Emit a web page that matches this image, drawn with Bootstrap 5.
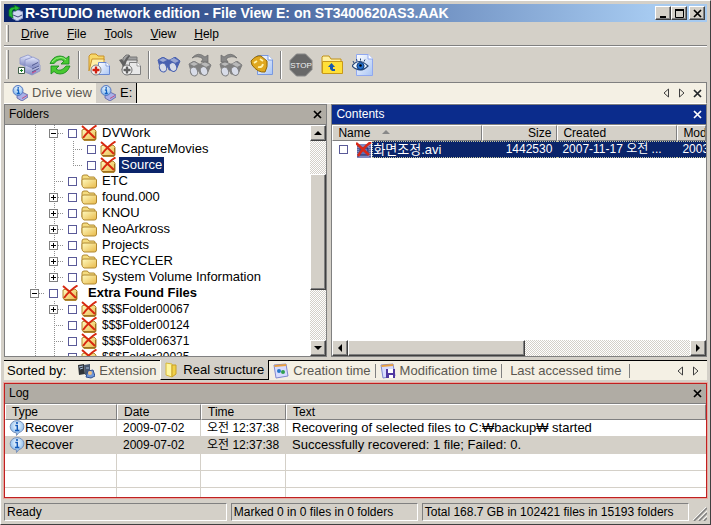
<!DOCTYPE html>
<html lang="en">
<head>
<meta charset="utf-8">
<meta name="viewport" content="width=device-width, initial-scale=1">
<title>R-STUDIO network edition</title>
<link href="https://cdn.jsdelivr.net/npm/bootstrap@5.3.0/dist/css/bootstrap.min.css" rel="stylesheet">
<style>
:root{--face:#d4d0c8;--shade:#808080;--dark:#404040;--cream:#f4f0e4;--navy:#0a246a;--line:#d4d0c8}
body{font-family:"Liberation Sans","Noto Sans CJK KR",sans-serif;font-size:12px;line-height:16px;color:#000;background:var(--face)}
button{font:inherit;color:inherit;padding:0;border:0;background:none}
a{color:inherit;text-decoration:none}
svg{display:block;flex:none}
.win{height:100vh;background:var(--face);border:1px solid #fff;border-right-color:var(--dark);border-bottom-color:var(--dark);padding:3px}
.titlebar{height:18px;background:linear-gradient(90deg,#0a246a,#a6caf0 92%);color:#fff;padding:0 2px 0 3px;gap:2px}
.titlebar h1{font-size:14px;line-height:18px;font-weight:700}
.capbtn{width:16px;height:14px;background:var(--face)}
.capgroup{gap:0}
.raised{background:var(--face);border:1px solid;border-color:#fff var(--dark) var(--dark) #fff;box-shadow:inset -1px -1px 0 var(--shade)}
.menubar{height:24px;border-bottom:1px solid var(--shade)}
.menulist{gap:18px}
.toolbar{height:36px;border-top:1px solid #fff}
.grip{width:3px;border-left:1px solid #fff;border-right:1px solid var(--shade);margin:3px 0 3px 2px}
.tool{width:31px;height:34px}
.toolsep{width:2px;height:28px;border-left:1px solid var(--shade);border-right:1px solid #fff;margin:0 3px}
.tabstrip{height:22px;background:var(--cream);border-top:1px solid var(--shade);border-bottom:1px solid #fff;border-right:1px solid var(--shade);font-size:13px;color:#5a5750}
.tabstrip .on{background:var(--face);border-right:1px solid #000;color:#000}
.pane{border:1px solid var(--shade);background:#fff;min-width:0}
.panehead{height:20px;background:#b0aca4;border-bottom:1px solid var(--shade)}
.panehead h2{font-size:12px;line-height:19px;font-weight:400}
.panehead.hot{background:#0b2c8c;color:#fff}
.folders{flex:0 0 46%}
.track{background:repeating-conic-gradient(#fff 0 25%,var(--face) 0 50%) 0 0/2px 2px}
.vbar{width:16px}.hbar{height:16px}
.arrow{width:16px;height:16px}
.vspace{flex:33}.vthumb{flex:115}.vrest{flex:50}
.hthumb{flex:176}.hrest{flex:166}
.tree{padding-left:21px;font-size:13px}
.tree li{height:16px;white-space:nowrap}
.guide{width:19px;height:16px;flex:none;--dot:#909090}
.thru{background:repeating-linear-gradient(var(--dot) 0 1px,transparent 1px 2px) 9px 0/1px 100% no-repeat}
.arm{background:repeating-linear-gradient(var(--dot) 0 1px,transparent 1px 2px) 9px 0/1px 100% no-repeat,repeating-linear-gradient(90deg,var(--dot) 0 1px,transparent 1px 2px) 9px 8px/10px 1px no-repeat}
.arm.end{background-size:1px 8px,10px 1px}
.expander{width:9px;height:9px;border:1px solid var(--shade);background:#fff}
.tick{appearance:none;width:9px;height:9px;border:1px solid #5a5a98;background:#fff;margin:0;flex:none}
.tree label{padding:0 2px;margin-left:3px}
.tree .picked{background:var(--navy);color:#fff}
.tree .numbered{font-size:12px}
.grid{width:100%;table-layout:fixed;border-collapse:separate;border-spacing:0}
.grid th{font-weight:400;background:var(--face);border:1px solid;border-color:#fff var(--shade) var(--shade) #fff;line-height:14px;height:16px}
.grid th,.grid td{padding:0 5px;white-space:nowrap;overflow:hidden}
.files td{height:17px;line-height:15px;background:var(--navy);color:#fff;border:dotted #c8c8a0;border-width:1px 0}
.files td:first-child{border:0;padding-left:7px;background:#fff}
.filename{background:var(--navy);border:1px dotted #c8c8a0;border-right:0;height:17px;flex:1;font-size:13px}
.sortbar{height:20px;background:var(--cream);font-size:13px;color:#5a5750;border-top:1px solid #000;margin-top:3px}
.sortbar .caption{padding:0 12px 0 3px}
.sortbar .on{background:var(--face);color:#000;border:solid #000;border-width:0 1px 1px 0;border-left:1px solid #fff;margin-top:-1px;height:20px}
.bar{width:1px;height:14px;background:var(--shade)}
.log{border:1px solid #c02020;outline:1px solid #e8a8a0;margin-top:3px;height:115px;overflow:hidden;background:#fff}
.records td{height:17px;line-height:16px;border-right:1px solid var(--line);border-bottom:1px solid var(--line)}
.records th,.records td{padding:0 6px}
.records td:first-child{padding:0 4px;font-size:13px}
.records td:last-child{border-right:0;font-size:13px}
.records .alt td{background:var(--face)}
.statusbar{height:18px;margin-top:5px}
.statusbar>span{border:1px solid;border-color:var(--shade) #fff #fff var(--shade);padding:0 2px;white-space:nowrap}
.s1{flex:224}.s2{flex:187}.s3{flex:270}
</style>
<script src="https://cdn.jsdelivr.net/npm/bootstrap@5.3.0/dist/js/bootstrap.bundle.min.js"></script>
</head>
<body class="overflow-hidden">
<svg width="0" height="0" class="position-absolute" aria-hidden="true">
<defs>
<linearGradient id="gold" x2="1" y2="1"><stop offset="0" stop-color="#fffbc0"/><stop offset="1" stop-color="#e8b848"/></linearGradient>
<linearGradient id="paper" x2="1" y2="1"><stop offset="0" stop-color="#fff"/><stop offset="1" stop-color="#a8c4f4"/></linearGradient>
<linearGradient id="steel" x2="0" y2="1"><stop offset="0" stop-color="#e8ecff"/><stop offset="1" stop-color="#8088c0"/></linearGradient>
<radialGradient id="orb" cx=".5" cy=".35"><stop offset="0" stop-color="#fff"/><stop offset="1" stop-color="#90c0f0"/></radialGradient>
<symbol id="folder" viewBox="0 0 16 16"><path d="M1 12V4q0-2 2-2h3q1 0 2 2h5q1 0 1 2v2" fill="#f4dc80" stroke="#b08830"/><path d="M3 6h11.500q1 0 1 1v6q0 2-2 2H3Q1 14 1 12V7q0-1 2-1z" fill="url(#gold)" stroke="#b08830"/></symbol>
<symbol id="lost" viewBox="0 0 16 16"><path d="M1 5l3-1 4 2 5-2 2 2v8l-1 1.500H3L1 13z" fill="url(#gold)" stroke="#b08830"/><path d="M2 14.500h12.500V7" fill="none" stroke="#a07020"/><path d="M1 1q6 5 13 12M15.500 .5Q8 5 2 13" fill="none" stroke="#d82810" stroke-width="2"/></symbol>
<symbol id="film" viewBox="0 0 16 16"><path d="M1 2h14v14H1z" fill="#8088c0"/><path d="M4 6h8v7H4z" fill="#6070b8" stroke="#202860"/><path d="M2 4v11M14 4v11" stroke="#303870" stroke-dasharray="1 1"/><path d="M0 1l13 12M15 0Q8 5 2 14" fill="none" stroke="#d82818" stroke-width="2.600"/></symbol>
<symbol id="diskinfo" viewBox="0 0 16 16"><path d="M5 11l5-4 6 3v2l-6 4-5-3z" fill="#a8b0e8" stroke="#5860a0" stroke-width=".8"/><path d="M10 13.500l5-3" stroke="#c05080"/><circle cx="6" cy="5.500" r="5" fill="url(#orb)" stroke="#5878c0"/><path d="M4.800 5h1.700v3M4.800 8.500h3" stroke="#1060c0" stroke-width="1.300" fill="none"/><circle cx="6.200" cy="2.900" r=".9" fill="#1060c0"/></symbol>
<symbol id="balloon" viewBox="0 0 16 16"><path d="M8 .7a6.600 6 0 0 1 2 11.800L7.500 15.500 7.300 12.800A6.400 6 0 0 1 8 .7z" fill="url(#orb)" stroke="#7890b8"/><path d="M6.300 5.500h2v5M6 10.500h4.300" stroke="#1058b8" stroke-width="1.500" fill="none"/><circle cx="8" cy="3" r="1.100" fill="#1058b8"/></symbol>
<symbol id="binocs" viewBox="0 0 24 16"><path d="M1 3l5-3 5 3 2 0 5-3 5 4-4 9H12l-1-4-3 5H4z" fill="currentColor" stroke="currentColor"/><path d="M2 3l4-2 4 2-4 2zM13 3l4-2 5 3-4 2z" fill="#fff" opacity=".45"/><ellipse cx="6" cy="10.500" rx="3.600" ry="4.500" fill="#d8dce8" stroke="currentColor" transform="rotate(-20 6 10.500)"/><ellipse cx="16" cy="10" rx="3.600" ry="4.500" fill="#d8dce8" stroke="currentColor" transform="rotate(-20 16 10)"/></symbol>
<symbol id="cal" viewBox="0 0 16 16"><path d="M1 2l12-1 2 12-12 2z" fill="#d8dcff" stroke="#8088d0"/><path d="M1.500 3l11.700-1" stroke="#e8a040" stroke-width="2"/></symbol>
<symbol id="prev" viewBox="0 0 7 10"><path d="M5.500 1v8L1 5z" fill="none" stroke="#404040"/></symbol>
<symbol id="next" viewBox="0 0 7 10"><path d="M1.500 1v8L6 5z" fill="none" stroke="#404040"/></symbol>
<symbol id="cross" viewBox="0 0 9 9"><path d="M1 1l7 7M8 1L1 8" fill="none" stroke="currentColor" stroke-width="1.700"/></symbol>
</defs>
</svg>

<div class="win d-flex flex-column">
  <header class="titlebar d-flex align-items-center flex-shrink-0">
    <svg width="16" height="16" viewBox="0 0 16 16"><path d="M6 7l5-2 5 2v6l-6 3-5-3z" fill="#d0d8f0" stroke="#8090c0"/><path d="M6 10l5 2 4-2" fill="none" stroke="#404878"/><path d="M2 8Q1 2 8 2l-1-2 6 3-5 3V4Q5 4 5 8l1 5-4-2z" fill="#28b838" stroke="#087818" stroke-width=".7"/></svg>
    <h1 class="m-0 text-nowrap flex-grow-1">R-STUDIO network edition - File View E: on ST3400620AS3.AAK</h1>
    <div class="capgroup d-flex">
      <button class="capbtn raised" aria-label="Minimize"><svg width="13" height="11" viewBox="0 0 13 11"><path d="M4 8h6v2H4z"/></svg></button>
      <button class="capbtn raised" aria-label="Maximize"><svg width="13" height="11" viewBox="0 0 13 11"><path d="M3.500 1v8.500h8V1" fill="none" stroke="#000"/><path d="M3 1h9v2H3z"/></svg></button>
    </div>
    <button class="capbtn raised text-black" aria-label="Close"><svg width="13" height="11" viewBox="-3 -1 13 11"><use href="#cross" width="9" height="9"/></svg></button>
  </header>

  <nav class="menubar d-flex flex-shrink-0" aria-label="Main menu">
    <div class="grip"></div>
    <div class="menulist d-flex align-items-center ps-2 ms-1">
      <a href="#"><u>D</u>rive</a><a href="#"><u>F</u>ile</a><a href="#"><u>T</u>ools</a><a href="#"><u>V</u>iew</a><a href="#"><u>H</u>elp</a>
    </div>
  </nav>

  <div class="toolbar d-flex flex-shrink-0" role="toolbar" aria-label="Tools">
    <div class="grip"></div>
    <div class="d-flex align-items-center ps-1">
      <button class="tool d-flex align-items-center justify-content-center" aria-label="Add drive"><svg width="24" height="24" viewBox="0 0 24 24"><g fill="url(#steel)" stroke="#8890c8" stroke-width=".8"><path d="M3 5l8-3 4 2v6l-7 3-5-2z"/><path d="M8 12l8-3 7 3v6l-8 4-7-3z"/><path d="M8 7l8-3 6 3v5l-7 3-7-3z"/></g><path d="M15 12.500l6-3M15 16l7-3M15 19l7-3.500" stroke="#505890"/><path d="M15 20l4-2" stroke="#d04080"/><path d="M1.500 14.500h6v6h-6z" fill="#fff" stroke="#406048"/><path d="M3 17.500h3M4.500 16v3" stroke="#108020"/></svg></button>
      <button class="tool d-flex align-items-center justify-content-center" aria-label="Refresh"><svg width="22" height="22" viewBox="0 0 22 22"><g fill="#48c830" stroke="#108818" stroke-width=".8"><path d="M1 9.500Q4 2 11 2q4 0 6 2.500L20 2v8h-8l3-3q-5-3.500-10 2.500z"/><path d="M21 12q-3 8-10 8-4 0-6-2.500L2 20v-8h8l-3 3q5 3.500 10-3z"/></g><path d="M3 8q4-5 9-4.500 3 .3 5 2.500" fill="none" stroke="#a0f088"/></svg></button>
      <div class="toolsep"></div>
      <button class="tool d-flex align-items-center justify-content-center" aria-label="Recover"><svg width="24" height="24" viewBox="0 0 24 24"><path d="M2 18V3l2-2h5l2 2h6v4" fill="#f8d868" stroke="#c89028"/><path d="M2 18l3-12h12v3" fill="#fff0a8" stroke="#c89028"/><path d="M11.500 9.500h8l3 3v9h-11z" fill="url(#paper)" stroke="#6888d0"/><path d="M19 9v4h4" fill="#fff" stroke="#6888d0" stroke-width=".7"/><circle cx="9" cy="17" r="5" fill="#f8f8f8" stroke="#808080"/><path d="M9 13.500v7M5.500 17h7" stroke="#d02010" stroke-width="2.400"/></svg></button>
      <button class="tool d-flex align-items-center justify-content-center" aria-label="Recover marked"><svg width="24" height="24" viewBox="0 0 24 24"><path d="M5 17V5l3-3h3l1 2h7v4" fill="#a0a0a0" stroke="#787878"/><path d="M4 17L7 7h12v3" fill="#e0e0e0" stroke="#707070"/><path d="M11.500 9.500h8l3 3v9h-11z" fill="#e8e8e8" stroke="#808080"/><path d="M19 9v4h4" fill="#fff" stroke="#808080" stroke-width=".7"/><path d="M1 7l3-1 2 3q2-5 5-7l1 1q-4 5-5 10H5z" fill="#606060"/><circle cx="9" cy="17" r="5" fill="#f8f8f8" stroke="#707070"/><path d="M9 13.500v7M5.500 17h7" stroke="#606060" stroke-width="2.400"/></svg></button>
      <div class="toolsep"></div>
      <button class="tool d-flex align-items-center justify-content-center" aria-label="Find"><svg width="24" height="16" color="#4860b0"><use href="#binocs"/></svg></button>
      <button class="tool d-flex align-items-center justify-content-center" aria-label="Find next"><svg width="24" height="24" viewBox="0 0 24 24" color="#808080"><use href="#binocs" y="8" width="24" height="16"/><path d="M4 5Q10-2 17 4l3-2v7h-7l2-3Q10 2 4 5z" fill="#888" stroke="#686868" stroke-width=".7"/></svg></button>
      <button class="tool d-flex align-items-center justify-content-center" aria-label="Find previous"><svg width="24" height="24" viewBox="0 0 24 24" color="#808080"><use href="#binocs" y="8" width="24" height="16"/><path d="M18 5Q12-2 5 4L2 2v7h7L7 6q5-4 11-1z" fill="#888" stroke="#686868" stroke-width=".7"/></svg></button>
      <button class="tool d-flex align-items-center justify-content-center" aria-label="File mask"><svg width="24" height="24" viewBox="0 0 24 24"><path d="M7.500 2.500h11l4 4v15h-15z" fill="url(#paper)" stroke="#7898e0"/><path d="M18 2v5h5" fill="#fff" stroke="#7898e0"/><path d="M1 8q5-6 10-5l6 5q1 6-2 11-7 1-13-7z" fill="#e0a820" stroke="#906808"/><path d="M4 10l3-2M10 6l3 2M8 14q4 1 5-3" fill="none" stroke="#fff4b0" stroke-width="1.800"/></svg></button>
      <div class="toolsep"></div>
      <button class="tool d-flex align-items-center justify-content-center" aria-label="Stop"><svg width="24" height="24" viewBox="0 0 24 24"><path d="M7.500 1h9L23 7.500v9L16.500 23h-9L1 16.500v-9z" fill="#686868" stroke="#888"/><text x="12" y="15" text-anchor="middle" font-size="8" fill="#f0f0f0">STOP</text></svg></button>
      <button class="tool d-flex align-items-center justify-content-center" aria-label="Up one level"><svg width="22" height="20" viewBox="0 0 22 20"><path d="M1 18V2l1-1h6l2 3h10v3" fill="#fff0a0" stroke="#c09018"/><path d="M1.500 6.500h20v12h-20z" fill="#ffe038" stroke="#c89818"/><path d="M7 12l3.500-4 3.500 4h-2v2h2v2h-3l-2-2v-2z" fill="#1858b0"/></svg></button>
      <button class="tool d-flex align-items-center justify-content-center" aria-label="Preview"><svg width="22" height="24" viewBox="0 0 22 24"><path d="M4.500 1.500h12l4 4v17h-16z" fill="url(#paper)" stroke="#90a8f0"/><path d="M16 1v5h5" fill="#fff" stroke="#90a8f0"/><path d="M0 13q7-9 16 0-8 8-16 0z" fill="#f0f8ff" stroke="#284878" stroke-width="1.200"/><circle cx="8.500" cy="13" r="3.600" fill="#2070d0" stroke="#103878"/><circle cx="8.500" cy="12.500" r="1.300"/><path d="M2 10L1 8M5 8L4.500 6M8.500 7.500v-2M12 8.500l1-2" stroke="#284878"/></svg></button>
    </div>
  </div>

  <div class="tabstrip d-flex flex-shrink-0">
    <a href="#" class="d-flex align-items-center ps-2 pe-1"><svg width="16" height="16"><use href="#diskinfo"/></svg><span class="ms-1">Drive view</span></a>
    <a href="#" class="on d-flex align-items-center px-1"><svg width="16" height="16"><use href="#diskinfo"/></svg><span class="ms-1">E:</span></a>
    <div class="ms-auto d-flex align-items-center gap-2 pe-1 text-dark">
      <button aria-label="Previous tab"><svg width="7" height="10"><use href="#prev"/></svg></button>
      <button aria-label="Next tab"><svg width="7" height="10"><use href="#next"/></svg></button>
      <button aria-label="Close tab"><svg width="9" height="9"><use href="#cross"/></svg></button>
    </div>
  </div>

  <main class="d-flex flex-grow-1 gap-1 overflow-hidden">
    <section class="pane folders d-flex flex-column">
      <div class="panehead d-flex align-items-center justify-content-between flex-shrink-0 px-1"><h2 class="m-0">Folders</h2><button aria-label="Close folders"><svg width="9" height="9"><use href="#cross"/></svg></button></div>
      <div class="d-flex flex-grow-1 overflow-hidden">
        <ul class="tree list-unstyled mb-0 flex-grow-1 overflow-hidden" id="tree"></ul>
        <div class="vbar track d-flex flex-column">
          <button class="arrow raised" aria-label="Scroll up"><svg width="14" height="14" viewBox="0 0 14 14"><path d="M3 9l4-4 4 4z"/></svg></button>
          <div class="vspace"></div><div class="vthumb raised"></div><div class="vrest"></div>
          <button class="arrow raised" aria-label="Scroll down"><svg width="14" height="14" viewBox="0 0 14 14"><path d="M3 5l4 4 4-4z"/></svg></button>
        </div>
      </div>
    </section>
    <section class="pane d-flex flex-column flex-grow-1">
      <div class="panehead hot d-flex align-items-center justify-content-between flex-shrink-0 px-1"><h2 class="m-0">Contents</h2><button aria-label="Close contents"><svg width="9" height="9"><use href="#cross"/></svg></button></div>
      <div class="flex-grow-1 overflow-hidden">
        <table class="grid files">
          <colgroup><col style="width:150px"><col style="width:75px"><col style="width:120px"><col></colgroup>
          <thead><tr><th>Name <svg class="d-inline-block ms-2 mb-1" width="8" height="5" viewBox="0 0 8 5"><path d="M0 5l4-4 4 4z" fill="#888"/></svg></th><th class="text-end">Size</th><th>Created</th><th>Modified</th></tr></thead>
          <tbody><tr><td class="pe-0"><div class="d-flex align-items-center"><input class="tick" type="checkbox" id="file1"><svg class="ms-2" width="16" height="16"><use href="#film"/></svg><label class="filename" for="file1">화면조정.avi</label></div></td><td class="text-end">1442530</td><td>2007-11-17 오전 ...</td><td>2003-11-17</td></tr></tbody>
        </table>
      </div>
      <div class="hbar track d-flex flex-shrink-0">
        <button class="arrow raised" aria-label="Scroll left"><svg width="14" height="14" viewBox="0 0 14 14"><path d="M9 3v8L5 7z"/></svg></button>
        <div class="hthumb raised"></div><div class="hrest"></div>
        <button class="arrow raised" aria-label="Scroll right"><svg width="14" height="14" viewBox="0 0 14 14"><path d="M5 3v8l4-4z"/></svg></button>
      </div>
    </section>
  </main>

  <nav class="sortbar d-flex align-items-center flex-shrink-0 text-nowrap" aria-label="Sort order">
    <span class="caption text-black">Sorted by:</span>
    <a href="#" class="d-flex align-items-center pe-1"><svg width="17" height="16" viewBox="0 0 17 16"><path d="M0 2l6-1 1 10-6 1z" fill="#303438"/><path d="M6 2l6-1v10l-5 1z" fill="#485870"/><path d="M1 4l4-1M2 6l3-1M8 5h3" stroke="#a8c0e0"/><path d="M8 14l2-6 5-1 2 6-4 2z" fill="#7098d8" stroke="#305090"/><circle cx="12" cy="10" r="2" fill="#f0c080"/></svg><span class="ms-1">Extension</span></a>
    <a href="#" class="on d-flex align-items-center px-1"><svg width="14" height="16" viewBox="0 0 14 16"><path d="M1 1l6 1v13l-6-2z" fill="#fff6a0" stroke="#d8b838"/><path d="M7 3h4v9l-4 3z" fill="#f0d048" stroke="#c8a028"/></svg><span class="ms-1">Real structure</span></a>
    <a href="#" class="d-flex align-items-center px-1"><svg width="16" height="16" viewBox="0 0 16 16"><use href="#cal"/><circle cx="6" cy="8" r="2" fill="#2878c8"/><circle cx="10" cy="9" r="2" fill="#30a050"/></svg><span class="ms-1">Creation time</span></a>
    <span class="bar"></span>
    <a href="#" class="d-flex align-items-center px-1"><svg width="16" height="16" viewBox="0 0 16 16"><use href="#cal"/><path d="M6 6h9v9H6z" fill="#5038a0"/><path d="M8 6h5v4H8zM9 12h4v3H9z" fill="#fff"/></svg><span class="ms-1">Modification time</span></a>
    <span class="bar"></span>
    <a href="#" class="px-2">Last accessed time</a>
    <span class="bar"></span>
    <div class="ms-auto d-flex align-items-center gap-2 pe-2">
      <button aria-label="Previous sort tab"><svg width="7" height="10"><use href="#prev"/></svg></button>
      <button aria-label="Next sort tab"><svg width="7" height="10"><use href="#next"/></svg></button>
    </div>
  </nav>

  <section class="log flex-shrink-0">
    <div class="panehead d-flex align-items-center justify-content-between px-1"><h2 class="m-0">Log</h2><button aria-label="Close log"><svg width="9" height="9"><use href="#cross"/></svg></button></div>
    <table class="grid records">
      <colgroup><col style="width:112px"><col style="width:84px"><col style="width:85px"><col></colgroup>
      <thead><tr><th>Type</th><th>Date</th><th>Time</th><th>Text</th></tr></thead>
      <tbody>
        <tr><td><div class="d-flex align-items-center"><svg width="16" height="16"><use href="#balloon"/></svg><span>Recover</span></div></td><td>2009-07-02</td><td>오전 12:37:38</td><td>Recovering of selected files to C:₩backup₩ started</td></tr>
        <tr class="alt"><td><div class="d-flex align-items-center"><svg width="16" height="16"><use href="#balloon"/></svg><span>Recover</span></div></td><td>2009-07-02</td><td>오전 12:37:38</td><td>Successfully recovered: 1 file; Failed: 0.</td></tr>
        <tr><td></td><td></td><td></td><td></td></tr>
        <tr><td></td><td></td><td></td><td></td></tr>
        <tr><td></td><td></td><td></td><td></td></tr>
      </tbody>
    </table>
  </section>

  <footer class="statusbar d-flex flex-shrink-0 gap-1">
    <span class="s1">Ready</span><span class="s2">Marked 0 in 0 files in 0 folders</span><span class="s3">Total 168.7 GB in 102421 files in 15193 folders</span>
    <svg class="align-self-end" width="14" height="14" viewBox="0 0 14 14"><path d="M1 14L14 1M6 14l8-8M11 14l3-3" stroke="#808080" stroke-width="1.500"/><path d="M0 13L13 0M5 13l9-9M10 13l4-4" stroke="#fff" stroke-width=".8"/></svg>
  </footer>
</div>
<script>
/* guides: t = line through, m/p = expander, P = last expander, a = arm, e = last arm */
const rows=[["tm","lost","DVWork"],["tta","lost","CaptureMovies"],["tte","lost","Source","picked"],["ta","folder","ETC"],["tp","folder","found.000"],["tp","folder","KNOU"],["tp","folder","NeoArkross"],["tp","folder","Projects"],["tp","folder","RECYCLER"],["tP","folder","System Volume Information"],["m","lost","Extra Found Files","fw-bold ms-2"],["tp","lost","$$$Folder00067","numbered"],["ta","lost","$$$Folder00124","numbered"],["ta","lost","$$$Folder06371","numbered"],["ta","lost","$$$Folder20025","numbered"]];
const cell=c=>c=="t"?'<span class="guide thru"></span>':`<span class="guide arm ${/[eP]/.test(c)?"end":""} d-flex align-items-center ps-1">${/[mpP]/.test(c)?`<button class="expander" aria-label="Toggle"><svg width="7" height="7" viewBox="0 0 7 7"><path d="M1 3h5v1H1z${c=="m"?"":"M3 1h1v5H3z"}"/></svg></button>`:""}</span>`;
document.getElementById("tree").innerHTML=rows.map((r,i)=>`<li class="d-flex align-items-center">${[...r[0]].map(cell).join("")}<input class="tick mx-1" type="checkbox" id="n${i}"><svg width="16" height="16"><use href="#${r[1]}"/></svg><label class="${r[3]||""}" for="n${i}">${r[2]}</label></li>`).join("");
</script>
</body>
</html>
